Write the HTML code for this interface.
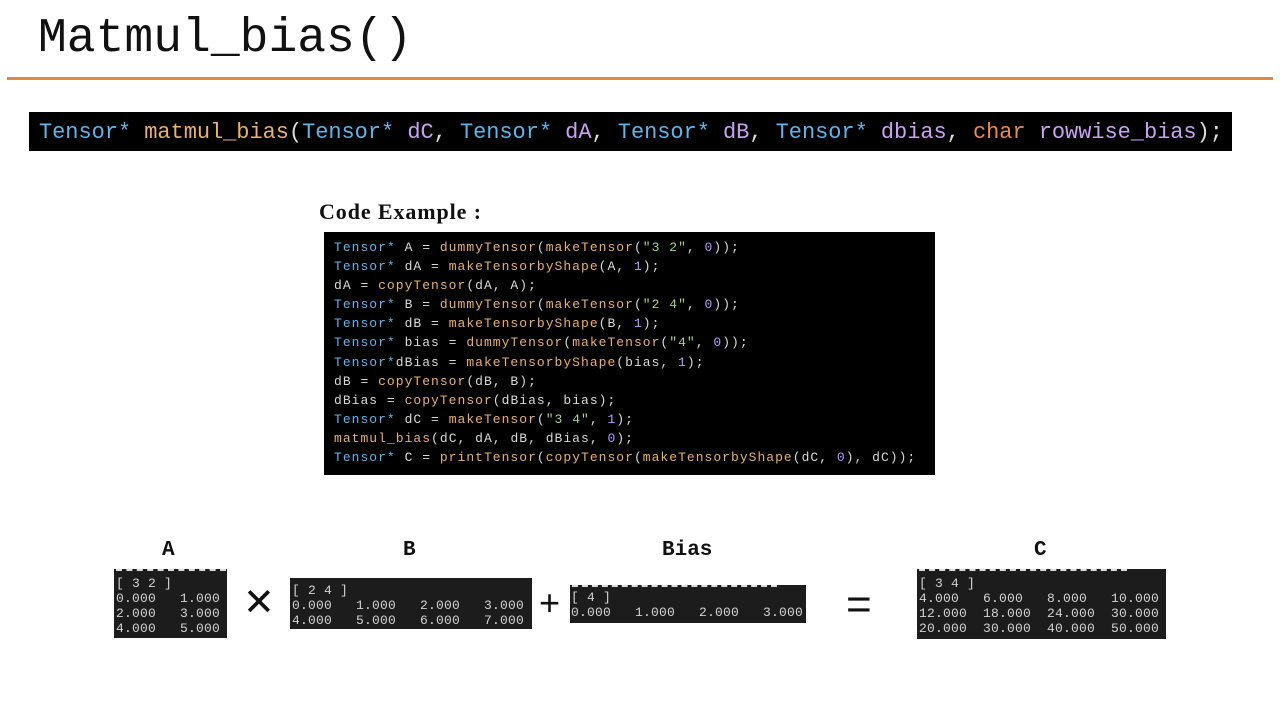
<!DOCTYPE html>
<html><head><meta charset="utf-8"><style>
body{margin:0;width:1280px;height:720px;background:#fff;position:relative;overflow:hidden;font-family:"Liberation Mono",monospace}
.a{position:absolute}
.t{color:#5cb6ea}.f{color:#eab06c}.v{color:#c9a2f2}.k{color:#e98a4a}.s{color:#a7d486}.n{color:#b69cff}.p{color:#d6d6d6}
.code{left:324px;top:232px;width:611px;height:243px;background:#000;font-size:13px;letter-spacing:1.02px;line-height:19.1px;color:#d8d8d8;padding:6px 0 0 10px;box-sizing:border-box;white-space:pre}
.m{background:#1c1c1c;color:#d2d2d2;font-size:13px;letter-spacing:0.2px;line-height:15px;white-space:pre;box-sizing:border-box;padding-left:2px}
.lbl{font-family:"Liberation Mono",monospace;font-weight:bold;font-size:21px;color:#111}
.dash{border-top:2px dashed #ddd}
</style></head><body>
<div class="a" style="left:38px;top:10px;font-size:48px;line-height:58px;color:#111">Matmul_bias()</div>
<div class="a" style="left:7px;top:77px;width:1266px;height:3px;background:#e2883f"></div>
<div class="a" style="left:29px;top:112px;width:1203px;height:39px;background:#000;font-size:22px;letter-spacing:-0.05px;line-height:42px;padding-left:10px;box-sizing:border-box;white-space:pre;color:#ddd"><span class="t">Tensor*</span> <span class="f">matmul_bias</span>(<span class="t">Tensor*</span> <span class="v">dC</span>, <span class="t">Tensor*</span> <span class="v">dA</span>, <span class="t">Tensor*</span> <span class="v">dB</span>, <span class="t">Tensor*</span> <span class="v">dbias</span>, <span class="k">char</span> <span class="v">rowwise_bias</span>);</div>
<div class="a" style="left:319px;top:199px;font-family:'Liberation Serif',serif;font-weight:bold;font-size:22px;letter-spacing:0.9px;color:#111">Code Example :</div>
<div class="a code"><span class="t">Tensor*</span> A = <span class="f">dummyTensor</span>(<span class="f">makeTensor</span>(<span class="s">"3 2"</span>, <span class="n">0</span>));
<span class="t">Tensor*</span> dA = <span class="f">makeTensorbyShape</span>(A, <span class="n">1</span>);
dA = <span class="f">copyTensor</span>(dA, A);
<span class="t">Tensor*</span> B = <span class="f">dummyTensor</span>(<span class="f">makeTensor</span>(<span class="s">"2 4"</span>, <span class="n">0</span>));
<span class="t">Tensor*</span> dB = <span class="f">makeTensorbyShape</span>(B, <span class="n">1</span>);
<span class="t">Tensor*</span> bias = <span class="f">dummyTensor</span>(<span class="f">makeTensor</span>(<span class="s">"4"</span>, <span class="n">0</span>));
<span class="t">Tensor*</span>dBias = <span class="f">makeTensorbyShape</span>(bias, <span class="n">1</span>);
dB = <span class="f">copyTensor</span>(dB, B);
dBias = <span class="f">copyTensor</span>(dBias, bias);
<span class="t">Tensor*</span> dC = <span class="f">makeTensor</span>(<span class="s">"3 4"</span>, <span class="n">1</span>);
<span class="f">matmul_bias</span>(dC, dA, dB, dBias, <span class="n">0</span>);
<span class="t">Tensor*</span> C = <span class="f">printTensor</span>(<span class="f">copyTensor</span>(<span class="f">makeTensorbyShape</span>(dC, <span class="n">0</span>), dC));</div>

<div class="a lbl" style="left:162px;top:539px">A</div>
<div class="a lbl" style="left:403px;top:539px">B</div>
<div class="a lbl" style="left:662px;top:539px">Bias</div>
<div class="a lbl" style="left:1034px;top:539px">C</div>

<div class="a m" style="left:114px;top:569px;width:113px;height:69px;padding-top:7px"><div class="a dash" style="left:2px;top:0;width:110px"></div>[ 3 2 ]
0.000   1.000
2.000   3.000
4.000   5.000</div>
<div class="a" style="left:243px;top:580px;font-size:38px;font-family:'Liberation Sans',sans-serif;color:#111;line-height:46px">✕</div>
<div class="a m" style="left:290px;top:578px;width:242px;height:51px;padding-top:5px">[ 2 4 ]
0.000   1.000   2.000   3.000
4.000   5.000   6.000   7.000</div>
<div class="a" style="left:539px;top:583px;font-size:36px;font-family:'Liberation Sans',sans-serif;color:#111;line-height:40px">+</div>
<div class="a m" style="left:570px;top:585px;width:236px;height:38px;padding-top:5px;padding-left:1px"><div class="a dash" style="left:2px;top:0;width:205px"></div>[ 4 ]
0.000   1.000   2.000   3.000</div>
<div class="a" style="left:846px;top:582px;font-size:44px;font-family:'Liberation Sans',sans-serif;color:#111;line-height:46px">=</div>
<div class="a m" style="left:917px;top:569px;width:249px;height:70px;padding-top:7px"><div class="a dash" style="left:2px;top:0;width:208px"></div>[ 3 4 ]
4.000   6.000   8.000   10.000
12.000  18.000  24.000  30.000
20.000  30.000  40.000  50.000</div>
</body></html>
